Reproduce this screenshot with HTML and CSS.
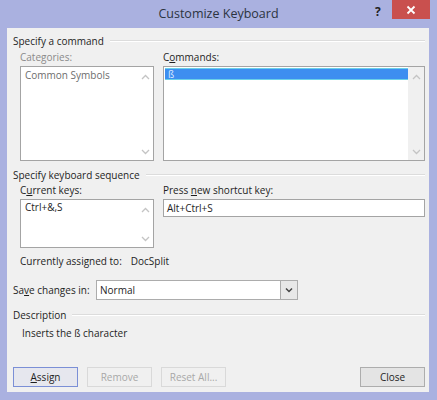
FILE: index.html
```html
<!DOCTYPE html>
<html>
<head>
<meta charset="utf-8">
<link rel="stylesheet" href="styles.css">
</head>
<body>
<div class="window">
  <div class="titlebar">
    <div class="title">Customize Keyboard</div>
    <div class="help">?</div>
    <div class="close">
      <svg width="10" height="10" viewBox="0 0 10 10"><path d="M1.5 1.5 L8.5 8.5 M8.5 1.5 L1.5 8.5" stroke="#fff" stroke-width="1.8"/></svg>
    </div>
  </div>
  <div class="client">
    <div class="group-head"><span>Specify a command</span></div>
    <div class="two-col first">
      <div class="col left">
        <div class="label disabled">Categories:</div>
        <div class="list tall">
          <div class="list-items"><div class="item gray">Common Symbols</div></div>
          <div class="scroll plain">
            <svg class="chev" width="9" height="6" viewBox="0 0 9 6"><path d="M1 5 L4.5 1.5 L8 5" fill="none" stroke="#c4c4c4" stroke-width="1.3"/></svg>
            <svg class="chev" width="9" height="6" viewBox="0 0 9 6"><path d="M1 1 L4.5 4.5 L8 1" fill="none" stroke="#c4c4c4" stroke-width="1.3"/></svg>
          </div>
        </div>
      </div>
      <div class="col right">
        <div class="label">C<u>o</u>mmands:</div>
        <div class="list tall">
          <div class="list-items"><div class="item selected">ß</div></div>
          <div class="scroll">
            <svg class="chev" width="9" height="6" viewBox="0 0 9 6"><path d="M1 5 L4.5 1.5 L8 5" fill="none" stroke="#c4c4c4" stroke-width="1.3"/></svg>
            <svg class="chev" width="9" height="6" viewBox="0 0 9 6"><path d="M1 1 L4.5 4.5 L8 1" fill="none" stroke="#c4c4c4" stroke-width="1.3"/></svg>
          </div>
        </div>
      </div>
    </div>

    <div class="group-head second"><span>Specify keyboard sequence</span></div>
    <div class="two-col seq">
      <div class="col left">
        <div class="label">C<u>u</u>rrent keys:</div>
        <div class="list short">
          <div class="list-items"><div class="item">Ctrl+&amp;,S</div></div>
          <div class="scroll plain">
            <svg class="chev" width="9" height="6" viewBox="0 0 9 6"><path d="M1 5 L4.5 1.5 L8 5" fill="none" stroke="#c4c4c4" stroke-width="1.3"/></svg>
            <svg class="chev" width="9" height="6" viewBox="0 0 9 6"><path d="M1 1 L4.5 4.5 L8 1" fill="none" stroke="#c4c4c4" stroke-width="1.3"/></svg>
          </div>
        </div>
      </div>
      <div class="col right">
        <div class="label">Press <u>n</u>ew shortcut key:</div>
        <div class="textbox">Alt+Ctrl+S</div>
      </div>
    </div>

    <div class="assigned"><span class="assigned-label">Currently assigned to:</span><span>DocSplit</span></div>

    <div class="save-row">
      <span class="save-label">Sa<u>v</u>e changes in:</span>
      <div class="select">
        <span class="select-text">Normal</span>
        <span class="select-btn">
          <svg width="8" height="6" viewBox="0 0 8 6"><path d="M1 1.5 L4 4.5 L7 1.5" fill="none" stroke="#444" stroke-width="1.5"/></svg>
        </span>
      </div>
    </div>

    <div class="group-head third"><span>Description</span></div>
    <div class="desc">Inserts the ß character</div>

    <div class="buttons">
      <div class="btn default"><u>A</u>ssign</div>
      <div class="btn disabled-btn">Remove</div>
      <div class="btn disabled-btn">Reset All...</div>
      <div class="spacer"></div>
      <div class="btn">Close</div>
    </div>
  </div>
</div>
</body>
</html>
```

FILE: styles.css
```css
html, body {
  margin: 0;
  padding: 0;
}
body {
  width: 437px;
  height: 400px;
  background: #aab1e0;
  font-family: "Open Sans", "Noto Sans", sans-serif;
  font-size: 10px;
  color: #1e1e1e;
  overflow: hidden;
  white-space: nowrap;
}
.window {
  width: 437px;
  height: 400px;
  display: flex;
  flex-direction: column;
  background: #aab1e0;
}
.titlebar {
  height: 28px;
  display: flex;
  align-items: flex-start;
  position: relative;
}
.title {
  position: absolute;
  left: 0;
  right: 0;
  top: 5px;
  text-align: center;
  font-size: 12.5px;
  color: #2c3440;
}
.help {
  margin-left: 375px;
  margin-top: 3px;
  width: 10px;
  font-weight: bold;
  font-size: 12px;
  color: #222;
}
.close {
  margin-left: 7px;
  width: 38px;
  height: 19px;
  background: #c9504e;
  display: flex;
  align-items: center;
  justify-content: center;
}
.client {
  margin: 0 8px 0 7px;
  height: 364px;
  background: #f0f0f0;
  padding: 0 4px 0 6px;
  box-sizing: border-box;
}
.group-head {
  display: flex;
  align-items: center;
  height: 14px;
  margin-top: 6px;
  color: #1e1e1e;
}
.group-head::after {
  content: "";
  flex: 1;
  height: 1px;
  margin-left: 6px;
  background: #dcdcdc;
  border-bottom: 1px solid #ffffff;
}
.group-head.second { margin-top: 7px; }
.group-head.third { margin-top: 8px; }
.two-col {
  display: flex;
  margin-left: 7px;
  gap: 9px;
}
.col { display: flex; flex-direction: column; }
.col.left { width: 134px; }
.col.right { flex: 1; }
.label {
  height: 14px;
  margin-top: 2px;
  margin-bottom: 2px;
  line-height: 14px;
}
.seq .label { margin-top: 1px; }
.label.disabled { color: #8a8a8a; }
.list {
  border: 1px solid #a4a4a4;
  background: #fff;
  display: flex;
  box-sizing: border-box;
}
.list.tall { height: 95px; }
.list.short { height: 49px; }
.list-items {
  flex: 1;
  padding: 1px 0 0 1px;
}
.item {
  height: 13px;
  line-height: 13px;
  padding-left: 3px;
}
.item.gray { color: #6d6d6d; padding-top: 1px; }
.item.selected {
  background: #3d8ef0;
  color: #dde9ff;
  border-top: 1px solid #6ad0e8;
  border-bottom: 1px solid #6ad0e8;
  height: 10px;
  line-height: 10px;
}
.scroll {
  width: 16px;
  background: #f0f0f0;
  display: flex;
  flex-direction: column;
  justify-content: space-between;
  align-items: center;
  padding: 7px 0 5px;
}
.scroll.plain { background: #fff; }
.textbox {
  height: 18px;
  border: 1px solid #a4a4a4;
  background: #fff;
  box-sizing: border-box;
  padding-left: 3px;
  line-height: 16px;
}
.assigned {
  margin-left: 7px;
  margin-top: 6px;
  height: 14px;
  line-height: 14px;
}
.assigned-label { margin-right: 9px; }
.save-row {
  display: flex;
  align-items: center;
  margin-top: 12px;
  height: 20px;
}
.save-label { width: 83px; }
.select {
  width: 202px;
  height: 20px;
  border: 1px solid #acacac;
  background: #fff;
  box-sizing: border-box;
  display: flex;
  align-items: center;
}
.select-text { flex: 1; padding-left: 3px; }
.select-btn {
  width: 16px;
  height: 18px;
  border-left: 1px solid #acacac;
  background: #e8e8e8;
  display: flex;
  align-items: center;
  justify-content: center;
}
.desc {
  margin-left: 9px;
  margin-top: 4px;
  height: 14px;
  line-height: 14px;
}
.buttons {
  display: flex;
  gap: 9px;
  margin-top: 27px;
}
.spacer { flex: 1; }
.btn {
  width: 65px;
  height: 20px;
  box-sizing: border-box;
  border: 1px solid #adadad;
  background: #e4e4e4;
  text-align: center;
  line-height: 18px;
  color: #1e1e1e;
}
.btn.default {
  border: 1px solid #7b8fd6;
  background: #e6e7ee;
}
.btn.disabled-btn {
  border: 1px solid #d9d9d9;
  background: #f0f0f0;
  color: #a8a8a8;
}
u { text-decoration: underline; text-underline-offset: 1px; }
```
